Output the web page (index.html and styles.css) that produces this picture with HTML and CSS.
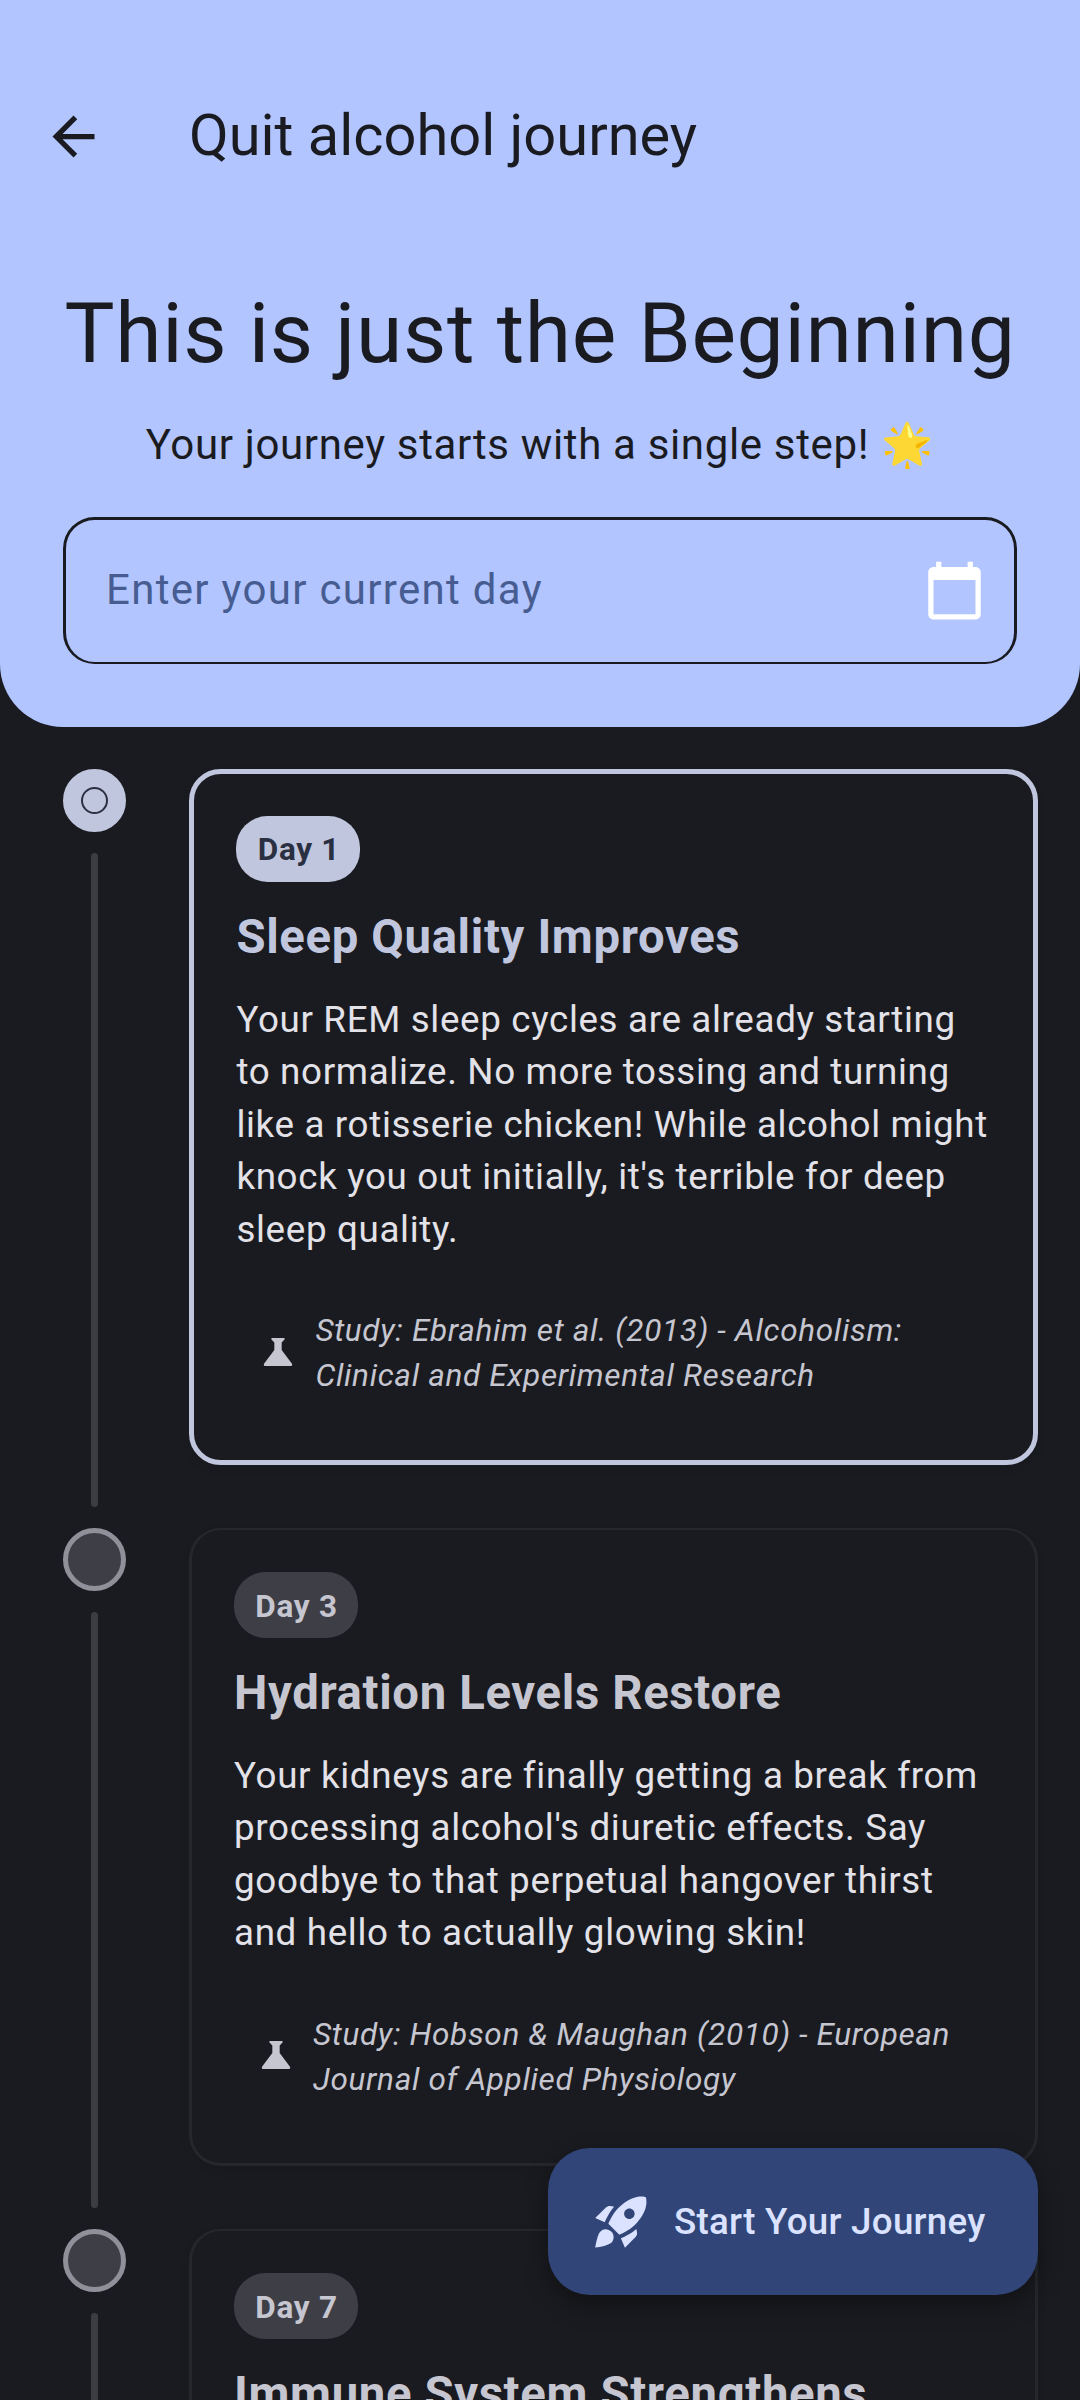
FILE: index.html
```html
<!DOCTYPE html>
<html lang="en">
<head>
<meta charset="utf-8">
<title>Quit alcohol journey</title>
<link rel="stylesheet" href="styles.css">
</head>
<body>
<header class="header">
  <div class="appbar">
    <svg class="back" viewBox="0 0 24 24"><path d="M20 11H7.83l5.59-5.59L12 4l-8 8 8 8 1.41-1.41L7.83 13H20z"/></svg>
    <div class="appbar-title">Quit alcohol journey</div>
  </div>
  <h1 class="headline">This is just the Beginning</h1>
  <p class="subtitle">Your journey starts with a single step! <span class="emoji">🌟</span></p>
  <div class="field">
    <span class="hint">Enter your current day</span>
    <svg class="calendar" viewBox="0 0 24 24"><path d="M20 3h-1V1h-2v2H7V1H5v2H4c-1.1 0-2 .9-2 2v16c0 1.1.9 2 2 2h16c1.1 0 2-.9 2-2V5c0-1.1-.9-2-2-2zm0 18H4V8h16v13z"/></svg>
  </div>
</header>
<main class="timeline">
  <section class="step current">
    <div class="rail"><div class="node"><div class="ring"></div></div><div class="line"></div></div>
    <article class="card">
      <span class="pill">Day 1</span>
      <h2 class="title">Sleep Quality Improves</h2>
      <p class="body">Your REM sleep cycles are already starting<br>to normalize. No more tossing and turning<br>like a rotisserie chicken! While alcohol might<br>knock you out initially, it's terrible for deep<br>sleep quality.</p>
      <div class="study">
        <svg class="flask" viewBox="0 0 24 24"><path d="M8.6 4h6.8c.5 0 .6.5.3.9L14.1 6.5v4.3l5.8 7.7c.5.7.1 1.5-.7 1.5H4.8c-.8 0-1.2-.8-.7-1.5l5.8-7.7V6.5L8.3 4.9c-.3-.4-.2-.9.3-.9z"/></svg>
        <span>Study: Ebrahim et al. (2013) - Alcoholism:<br>Clinical and Experimental Research</span>
      </div>
    </article>
  </section>
  <section class="step">
    <div class="rail"><div class="node"></div><div class="line"></div></div>
    <article class="card">
      <span class="pill">Day 3</span>
      <h2 class="title">Hydration Levels Restore</h2>
      <p class="body">Your kidneys are finally getting a break from<br>processing alcohol's diuretic effects. Say<br>goodbye to that perpetual hangover thirst<br>and hello to actually glowing skin!</p>
      <div class="study">
        <svg class="flask" viewBox="0 0 24 24"><path d="M8.6 4h6.8c.5 0 .6.5.3.9L14.1 6.5v4.3l5.8 7.7c.5.7.1 1.5-.7 1.5H4.8c-.8 0-1.2-.8-.7-1.5l5.8-7.7V6.5L8.3 4.9c-.3-.4-.2-.9.3-.9z"/></svg>
        <span>Study: Hobson &amp; Maughan (2010) - European<br>Journal of Applied Physiology</span>
      </div>
    </article>
  </section>
  <section class="step">
    <div class="rail"><div class="node"></div><div class="line"></div></div>
    <article class="card">
      <span class="pill">Day 7</span>
      <h2 class="title">Immune System Strengthens</h2>
    </article>
  </section>
</main>
<div class="fab">
  <svg class="rocket" viewBox="0 0 24 24"><path d="M9.19 6.35c-2.04 2.29-3.44 5.58-3.57 5.89L2 10.69l4.05-4.05c.47-.47 1.15-.68 1.81-.55l1.33.26zM11.17 17s3.74-1.55 5.89-3.7c5.4-5.4 4.5-9.62 4.21-10.57-.95-.3-5.17-1.19-10.57 4.21C8.55 9.09 7 12.83 7 12.83L11.17 17zm6.48-2.19c-2.29 2.04-5.58 3.44-5.89 3.57L13.31 22l4.05-4.05c.47-.47.68-1.15.55-1.81l-.26-1.33zM9 18c0 .83-.34 1.58-.88 2.12C6.94 21.3 2 22 2 22s.7-4.94 1.88-6.12A2.996 2.996 0 0 1 9 18zm4-9c0-1.1.9-2 2-2s2 .9 2 2-.9 2-2 2-2-.9-2-2z"/></svg>
  <span>Start Your Journey</span>
</div>
</body>
</html>
```
FILE: styles.css
```css
* { box-sizing: border-box; margin: 0; padding: 0; }
body {
  width: 1080px;
  height: 2400px;
  overflow: hidden;
  position: relative;
  background: #1a1b20;
  font-family: Roboto, sans-serif;
  color: #e3e2e9;
}
svg { display: block; flex: none; fill: currentColor; }
.header {
  height: 727px;
  padding: 63px 63px 0;
  background: #b2c5ff;
  color: #1a1b20;
  border-radius: 0 0 63px 63px;
}
.appbar { height: 147px; margin-left: -21px; display: flex; align-items: center; gap: 84px; }
.back { width: 63px; height: 63px; }
.appbar-title { padding-bottom: 3px; font-size: 57.75px; line-height: 73px; white-space: nowrap; }
.headline {
  margin-top: 71px;
  font-size: 84px;
  font-weight: 400;
  line-height: 105px;
  letter-spacing: .656px;
  text-align: center;
  white-space: nowrap;
}
.subtitle {
  margin-top: 27px;
  font-size: 42px;
  line-height: 63px;
  letter-spacing: .656px;
  text-align: center;
  white-space: nowrap;
}
.emoji { margin-left: 1px; font-family: "Noto Color Emoji", sans-serif; line-height: 1; }
.field {
  height: 147px;
  margin-top: 41px;
  padding: 0 28.5px 0 40px;
  display: flex;
  align-items: center;
  justify-content: space-between;
  border: 3px solid #1a1b20;
  border-bottom-width: 2px;
  border-radius: 31.5px;
}
.hint { padding-bottom: 3px; font-size: 42px; letter-spacing: 1.3125px; color: #475d92; }
.calendar { width: 63px; height: 63px; margin-bottom: 2px; color: #fff; }
.timeline { height: 1673px; overflow: hidden; padding: 42px 42px 0 63px; }
.step { display: flex; gap: 63px; height: 759px; }
.step + .step { height: 701px; }
.rail { width: 63px; display: flex; flex-direction: column; align-items: center; gap: 21px; padding-bottom: 21px; }
.node {
  width: 63px;
  height: 63px;
  flex: none;
  display: flex;
  align-items: center;
  justify-content: center;
  border: 5px solid #90909a;
  border-radius: 50%;
  background: #3e3e46;
}
.current .node { background: #c0c6dd; border-color: #c0c6dd; }
.ring { width: 27px; height: 27px; border: 2.4px solid #2a3042; border-radius: 50%; }
.line { width: 7px; flex: 1; border-radius: 4px; background: #3c3d42; }
.card {
  width: 849px;
  height: 638px;
  padding: 42px;
  border: 3px solid #26272c;
  border-top-width: 2px;
  border-radius: 31.5px;
  box-shadow: 0 4px 10px rgba(0, 0, 0, .08);
}
.current .card { height: 696px; padding-left: 42.4px; border: 5px solid #c0c6dd; }
.pill {
  display: block;
  width: 124px;
  height: 66px;
  padding-left: 1px;
  border-radius: 31.5px;
  background: #3e3e46;
  color: #c6c6d0;
  font-size: 31.5px;
  font-weight: 700;
  line-height: 69px;
  letter-spacing: .7px;
  text-align: center;
  white-space: nowrap;
}
.current .pill { background: #c0c6dd; color: #2a3042; line-height: 68px; }
.title {
  margin-top: 20px;
  font-size: 47.25px;
  font-weight: 700;
  line-height: 70px;
  letter-spacing: .656px;
  white-space: nowrap;
  color: #c6c6d0;
}
.current .title { color: #c0c6dd; }
.body {
  margin-top: 21.5px;
  font-size: 36.75px;
  line-height: 52.5px;
  letter-spacing: .656px;
  white-space: nowrap;
}
.study {
  margin-top: 52px;
  padding-left: 21px;
  display: flex;
  align-items: center;
  gap: 16px;
  font-size: 31.5px;
  font-style: italic;
  line-height: 45px;
  letter-spacing: .656px;
  white-space: nowrap;
  color: #c6c6d0;
}
.flask { width: 42px; height: 42px; margin-bottom: 3px; }
.fab {
  position: absolute;
  left: 548px;
  top: 2148px;
  width: 490px;
  height: 147px;
  padding-left: 42px;
  display: flex;
  align-items: center;
  gap: 21px;
  border-radius: 42px;
  background: #314578;
  color: #dae2ff;
  font-size: 36.75px;
  font-weight: 500;
  letter-spacing: .26px;
  white-space: nowrap;
  box-shadow: 0 10px 24px rgba(0, 0, 0, .35);
}
.rocket { width: 63px; height: 63px; }
```
